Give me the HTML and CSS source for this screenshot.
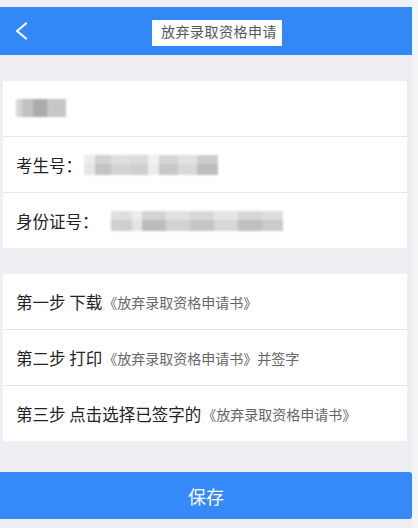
FILE: index.html
```html
<!DOCTYPE html>
<html lang="zh-CN">
<head>
    <meta charset="UTF-8">
    <meta name="viewport" content="width=device-width, initial-scale=1.0">
    <title>放弃录取资格申请</title>
    <link rel="stylesheet" href="styles.css">
</head>
<body>
    <div class="page">
        <div class="top-bar">
            <span class="back">
                <svg width="14" height="18" viewBox="0 0 14 18"><polyline points="11,1.5 2,9 11,16.5" fill="none" stroke="#fff" stroke-width="2.2" stroke-linecap="round" stroke-linejoin="round"/></svg>
            </span>
            <div class="title">放弃录取资格申请</div>
        </div>

        <div class="card info">
            <div class="row"><span class="mosaic mosaic-name"></span></div>
            <div class="row"><span class="label">考生号：</span><span class="mosaic mosaic-num"></span></div>
            <div class="row"><span class="label">身份证号：</span><span class="mosaic mosaic-id"></span></div>
        </div>

        <div class="card steps">
            <div class="row"><span class="label">第一步 下载</span><span class="doc">《放弃录取资格申请书》</span></div>
            <div class="row"><span class="label">第二步 打印</span><span class="doc">《放弃录取资格申请书》并签字</span></div>
            <div class="row"><span class="label">第三步 点击选择已签字的</span><span class="doc">《放弃录取资格申请书》</span></div>
        </div>

        <button class="save-btn">保存</button>
    </div>
</body>
</html>
```

FILE: styles.css
```css
html{background:#f4f4f7}
body{margin:0;font-family:"Noto Sans CJK SC","Noto Sans",sans-serif;color:#222}
.page{width:412px;height:528px;background:#eeeef3;padding-top:7px;box-sizing:border-box}
.top-bar{height:48px;background:#3388f8;display:flex;align-items:center;justify-content:center;position:relative}
.back{position:absolute;left:15px;top:15px;display:flex}
.title{background:#fff;color:#555;font-family:"Liberation Serif","Noto Sans CJK SC",serif;font-size:14px;height:26px;line-height:26px;padding:0 5px 0 9px;margin-left:22px;margin-top:4px;letter-spacing:.5px}
.card{background:#fff;margin:0 5px 0 3px}
.info{margin-top:26px}
.steps{margin-top:26px}
.row{height:55px;display:flex;align-items:center;padding-left:13px;border-top:1px solid #e6e6e9;font-size:16.5px}
.row:first-child{border-top:none}
.row .label{white-space:nowrap}
.doc{font-family:"Liberation Serif","Noto Sans CJK SC",serif;font-size:14px;color:#666;margin-left:1px}
.mosaic{display:inline-block;height:20px;filter:blur(1.2px)}
.mosaic-name{width:50px;height:18px;margin-top:-2px;background:linear-gradient(90deg,#d6d6d6 0 12%,#c2c2c2 12% 34%,#ababab 34% 62%,#c6c6c6 62% 100%)}
.mosaic-num{width:134px;margin-left:2px;background:linear-gradient(180deg,rgba(255,255,255,.25) 0 45%,transparent 45%),linear-gradient(90deg,#e6e6e6 0 8%,#c3c3c3 8% 20%,#d4d4d4 20% 34%,#cfcfcf 34% 48%,#ececec 48% 56%,#c8c8c8 56% 70%,#d9d9d9 70% 84%,#bdbdbd 84% 100%)}
.mosaic-id{width:172px;margin-left:12px;background:linear-gradient(180deg,rgba(255,255,255,.35) 0 45%,transparent 45%),linear-gradient(90deg,#cfcfcf 0 12%,#e4e4e4 12% 18%,#bcbcbc 18% 32%,#d2d2d2 32% 46%,#c4c4c4 46% 60%,#d8d8d8 60% 74%,#c0c0c0 74% 88%,#cbcbcb 88% 100%)}
.save-btn{display:block;width:412px;height:47px;margin-top:31px;border:none;background:#3589f9;color:#fff;font-family:"Noto Sans CJK SC",sans-serif;font-size:18px;border-radius:0 3px 3px 0;cursor:pointer}
```
